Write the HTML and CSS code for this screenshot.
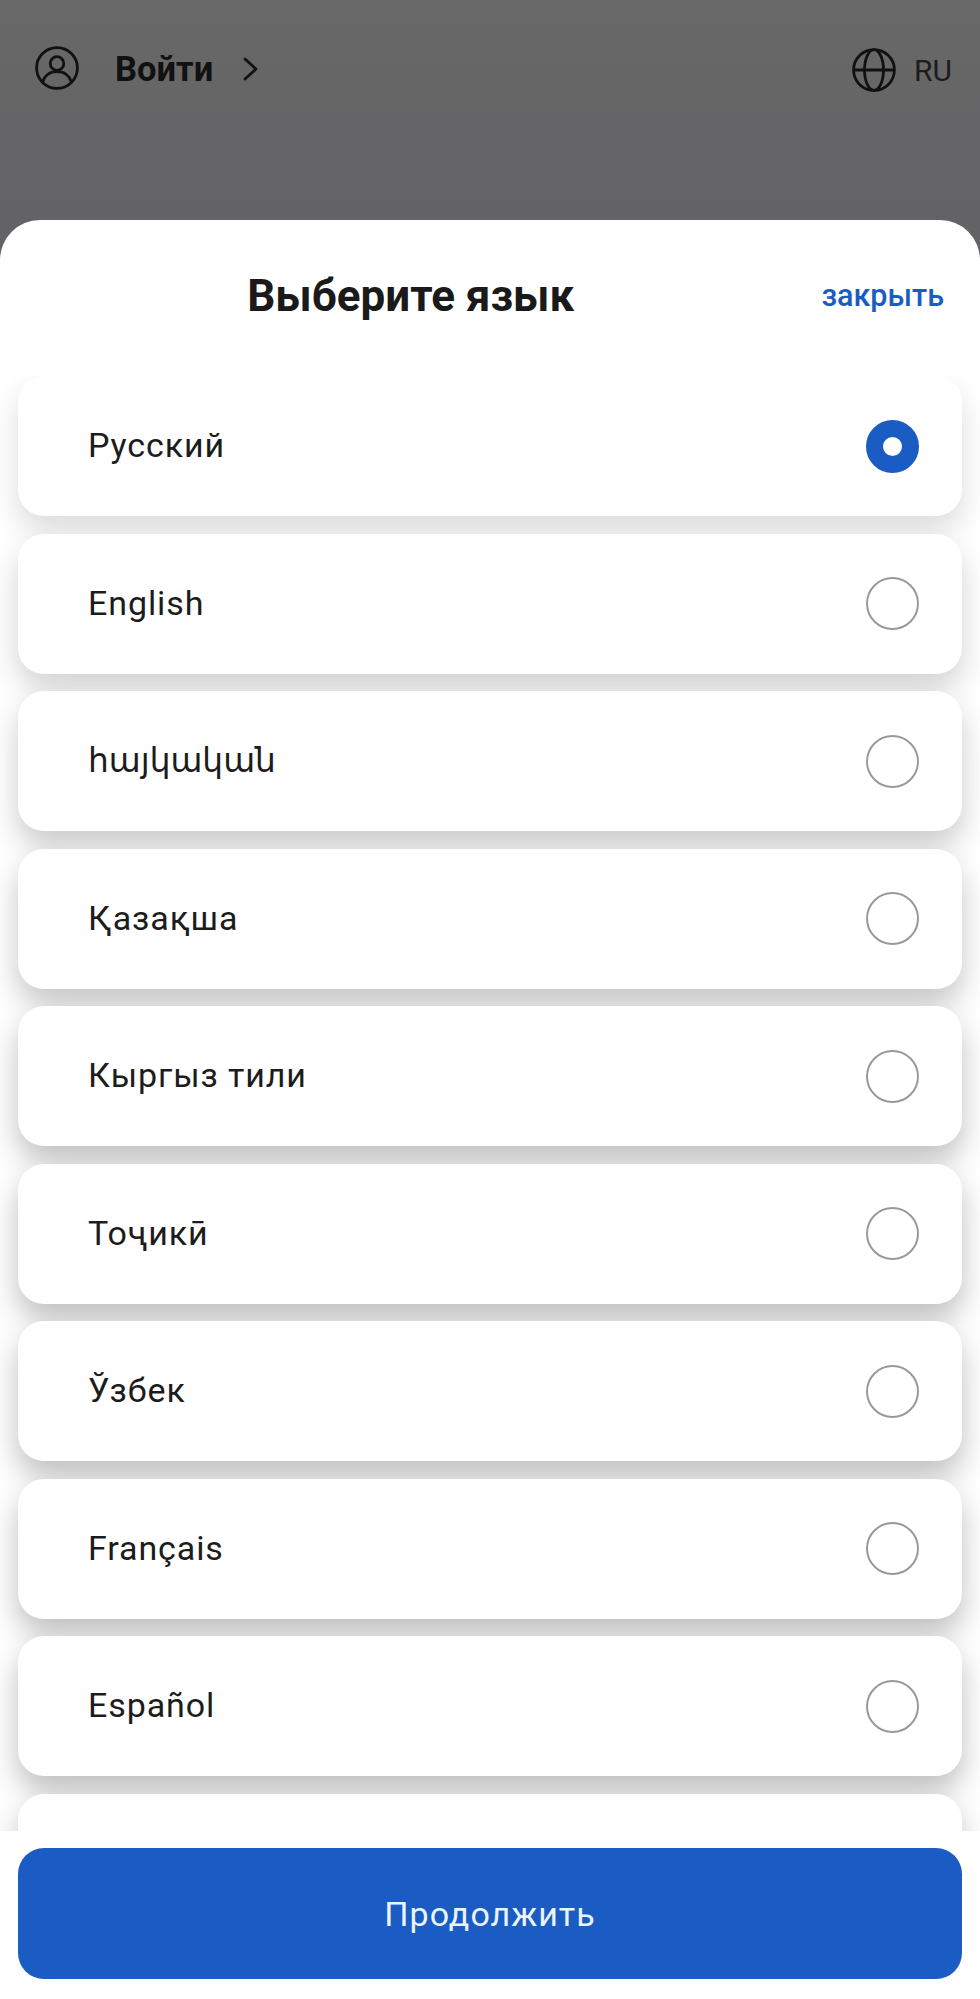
FILE: index.html
```html
<!DOCTYPE html>
<html lang="ru">
<head>
  <meta charset="UTF-8">
  <meta name="viewport" content="width=device-width, initial-scale=1.0">
  <title>Выберите язык</title>
  <link rel="stylesheet" href="styles.css">
</head>
<body>
  <div class="page">
    <div class="topbar">
      <svg class="icon-user" width="44" height="44" viewBox="0 0 44 44" fill="none" stroke="#111" stroke-width="2.8">
        <circle cx="22" cy="22" r="20.4"/>
        <circle cx="22" cy="17.5" r="6.8"/>
        <path d="M7.5 36c2-6.5 7.500-10.500 14.500-10.500S34.500 29.500 36.500 36"/>
      </svg>
      <span class="login">Войти</span>
      <svg class="icon-chevron" width="15" height="24" viewBox="0 0 15 24" fill="none" stroke="#111" stroke-width="2.800" stroke-linecap="round" stroke-linejoin="round">
        <path d="M2 2l11 10L2 22"/>
      </svg>
      <div class="lang-switch">
        <svg width="44" height="44" viewBox="0 0 44 44" fill="none" stroke="#111" stroke-width="2.800">
          <circle cx="22" cy="22" r="20.400"/>
          <ellipse cx="22" cy="22" rx="9.500" ry="20.400"/>
          <path d="M2 22h40"/>
        </svg>
        <span class="lang-code">RU</span>
      </div>
    </div>

    <div class="sheet">
      <div class="sheet-head">
        <h2>Выберите язык</h2>
        <a class="close-link">закрыть</a>
      </div>

      <div class="lang-list">
        <div class="lang-item"><span>Русский</span><i class="radio checked"></i></div>
        <div class="lang-item"><span>English</span><i class="radio"></i></div>
        <div class="lang-item"><span class="armenian">հայկական</span><i class="radio"></i></div>
        <div class="lang-item"><span>Қазақша</span><i class="radio"></i></div>
        <div class="lang-item"><span>Кыргыз тили</span><i class="radio"></i></div>
        <div class="lang-item"><span>Тоҷикӣ</span><i class="radio"></i></div>
        <div class="lang-item"><span>Ўзбек</span><i class="radio"></i></div>
        <div class="lang-item"><span>Français</span><i class="radio"></i></div>
        <div class="lang-item"><span>Español</span><i class="radio"></i></div>
        <div class="lang-item"></div>
      </div>

      <div class="sheet-foot">
        <button class="continue-btn">Продолжить</button>
      </div>
    </div>
  </div>
</body>
</html>
```

FILE: styles.css
```css
body {
  margin: 0;
  font-family: Roboto, "Noto Sans", sans-serif;
  background: #636366;
}
.page {
  height: 1999px;
  display: flex;
  flex-direction: column;
  overflow: hidden;
  background: linear-gradient(#686868, #636366 220px);
}
.topbar {
  height: 220px;
  flex-shrink: 0;
  box-sizing: border-box;
  padding: 46px 28px 0 35px;
  display: flex;
  align-items: flex-start;
}
.login {
  margin-left: 36px;
  font-size: 34.5px;
  font-weight: 700;
  line-height: 46px;
  color: #111;
}
.icon-chevron {
  margin: 11px 0 0 30px;
}
.lang-switch {
  margin-left: auto;
  padding-top: 2px;
  display: flex;
  align-items: center;
  gap: 18px;
}
.lang-code {
  font-size: 30px;
  color: #1c1c1c;
}

.sheet {
  flex: 1;
  min-height: 0;
  display: flex;
  flex-direction: column;
  background: #fff;
  border-radius: 40px 40px 0 0;
}
.sheet-head {
  height: 156px;
  flex-shrink: 0;
  box-sizing: border-box;
  padding: 0 36px 4px 0;
  display: flex;
  align-items: center;
}
.sheet-head h2 {
  flex: 1;
  margin: 0;
  text-align: center;
  font-size: 44px;
  font-weight: 700;
  color: #1a1a1a;
}
.close-link {
  margin-top: -2px;
  font-size: 30.5px;
  font-weight: 500;
  color: #1a5bc4;
}

.lang-list {
  flex: 1;
  min-height: 0;
  overflow: hidden;
  padding: 0 18px;
  display: flex;
  flex-direction: column;
  gap: 17.5px;
}
.lang-item {
  --shade: 0.26;
  position: relative;
  height: 140px;
  flex-shrink: 0;
  box-sizing: border-box;
  padding: 0 43px 2px 70px;
  display: flex;
  align-items: center;
  justify-content: space-between;
  background: #fff;
  border-radius: 26px;
  box-shadow: 0 15px 30px rgba(0,0,0,var(--shade));
  font-size: 34px;
  letter-spacing: 0.9px;
  color: #1c1c1c;
}
.lang-item:nth-child(1) { --shade: 0.14; }
.lang-item:nth-child(2) { --shade: 0.18; }
.lang-item:nth-child(3) { --shade: 0.21; }
.lang-item:nth-child(4) { --shade: 0.23; }
.lang-item:nth-child(5) { --shade: 0.25; }
.armenian {
  margin-top: 2px;
  font-family: "DejaVu Sans", sans-serif;
  font-size: 32.8px;
  letter-spacing: 0;
}
.radio {
  width: 53px;
  height: 53px;
  margin-top: 2px;
  box-sizing: border-box;
  border: 2.5px solid #999;
  border-radius: 50%;
}
.radio.checked {
  border: 17px solid #1a5bc4;
}

.sheet-foot {
  height: 168px;
  flex-shrink: 0;
  box-sizing: border-box;
  padding: 17px 18px 20px;
  background: #fff;
}
.continue-btn {
  width: 100%;
  height: 131px;
  border: none;
  border-radius: 26px;
  background: #1a5bc4;
  color: #eaf5ff;
  font-family: Roboto, sans-serif;
  font-size: 34px;
  letter-spacing: 1px;
}
```
